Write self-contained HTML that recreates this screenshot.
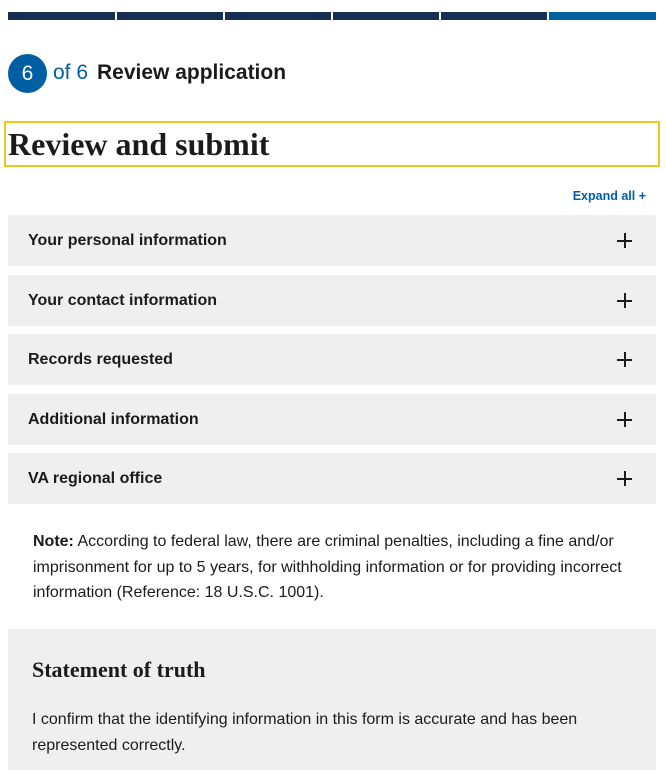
<!DOCTYPE html>
<html><head><style>
body{margin:0;width:666px;height:770px;overflow:hidden;background:#fff;font-family:"Liberation Sans",sans-serif;color:#1b1b1b;position:relative}
.seg{position:absolute;top:12px;height:8px;background:#162e51;width:107px}
.circ{position:absolute;left:8px;top:54px;width:39px;height:39px;border-radius:50%;background:#005ea2;color:#fff;font-size:21px;text-align:center;line-height:39px}
.acc{position:absolute;left:8px;width:648px;height:51px;background:#efefef}
.acc span{position:absolute;left:20px;top:17px;font-weight:bold;font-size:16px}
.acc b{position:absolute;right:24px;top:18px;width:15px;height:15px}
.acc b:before{content:"";position:absolute;left:0;top:6.5px;width:15px;height:2px;background:#1b1b1b}
.acc b:after{content:"";position:absolute;left:6.5px;top:0;width:2px;height:15px;background:#1b1b1b}
</style></head><body>
<div class="seg" style="left:8px"></div><div class="seg" style="left:117px;width:106px"></div><div class="seg" style="left:225px;width:106px"></div><div class="seg" style="left:333px;width:106px"></div><div class="seg" style="left:441px;width:106px"></div><div class="seg" style="left:549px;background:#005ea2"></div>
<div class="circ">6</div>
<div style="position:absolute;left:53px;top:61px;font-size:21px;color:#005ea2">of 6</div>
<div style="position:absolute;left:97px;top:61px;font-size:21px;font-weight:bold">Review application</div>
<div style="position:absolute;left:4px;top:121px;width:652px;height:42px;border:2px solid #f5c518"></div>
<div style="position:absolute;left:8px;top:126px;font-family:'Liberation Serif',serif;font-weight:bold;font-size:32px">Review and submit</div>
<div style="position:absolute;right:20px;top:189px;font-size:12.5px;font-weight:bold;color:#005ea2">Expand all +</div>
<div class="acc" style="top:215px"><span>Your personal information</span><b></b></div>
<div class="acc" style="top:275px"><span>Your contact information</span><b></b></div>
<div class="acc" style="top:334px"><span>Records requested</span><b></b></div>
<div class="acc" style="top:394px"><span>Additional information</span><b></b></div>
<div class="acc" style="top:453px"><span>VA regional office</span><b></b></div>
<div style="position:absolute;left:33px;top:529px;width:620px;font-size:16px;line-height:25.5px"><b>Note:</b> According to federal law, there are criminal penalties, including a fine and/or imprisonment for up to 5 years, for withholding information or for providing incorrect information (Reference: 18 U.S.C. 1001).</div>
<div style="position:absolute;left:8px;top:629px;width:648px;height:141px;background:#efefef">
<div style="position:absolute;left:24px;top:28px;font-family:'Liberation Serif',serif;font-weight:bold;font-size:22px">Statement of truth</div>
<div style="position:absolute;left:24px;top:78px;width:590px;font-size:16px;line-height:25.5px">I confirm that the identifying information in this form is accurate and has been represented correctly.</div>
</div>
</body></html>
